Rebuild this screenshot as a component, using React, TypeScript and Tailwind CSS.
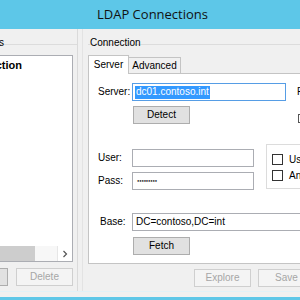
import React from 'react'

const FONT = { fontFamily: '"Liberation Sans", Arial, sans-serif' }

function Button({
  label,
  disabled,
  className = '',
}: {
  label: string
  disabled?: boolean
  className?: string
}) {
  return (
    <div
      className={`flex h-[18px] w-[57px] shrink-0 items-center justify-center border text-[10px] leading-none ${
        disabled
          ? 'border-[#cfcfcf] bg-[#f4f4f4] text-[#a6a6a6]'
          : 'border-[#adadad] bg-[#e1e1e1] text-black'
      } ${className}`}
    >
      {label}
    </div>
  )
}

function TextBox({
  children,
  focused,
  className = '',
}: {
  children?: React.ReactNode
  focused?: boolean
  className?: string
}) {
  return (
    <div
      className={`flex h-[18px] shrink-0 items-center border bg-white pl-[2px] text-[10px] leading-none ${
        focused ? 'border-[#569de5]' : 'border-[#abadb3]'
      } ${className}`}
    >
      {children}
    </div>
  )
}

function CheckRow({ label }: { label: string }) {
  return (
    <div className="flex h-[11px] items-center gap-[6px]">
      <div className="h-[11px] w-[11px] shrink-0 border border-[#333] bg-white" />
      <span className="whitespace-nowrap text-[10px] leading-none">{label}</span>
    </div>
  )
}

export default function App() {
  return (
    <div
      className="flex h-[300px] w-[300px] flex-col overflow-hidden bg-[#f0f0f0] text-black"
      style={FONT}
    >
      {/* title bar */}
      <div className="flex h-[29px] shrink-0 items-center justify-center bg-[#5dc7e8] pl-[5px]">
        <span
          className="text-[13px] leading-none text-[#111]"
          style={{ fontFamily: '"Open Sans", "Noto Sans", sans-serif' }}
        >
          LDAP Connections
        </span>
      </div>

      {/* body */}
      <div className="flex h-[262px] shrink-0">
        {/* left panel: list of connections */}
        <div className="w-[78px] shrink-0 overflow-hidden border-r border-[#dadada]">
          <div className="ml-[-72px] flex w-[150px] flex-col">
            <div className="flex h-[16px] items-start justify-end border-b border-[#dcdcdc] pr-[74px]">
              <span className="mt-[9px] whitespace-nowrap text-[10px] leading-none">Connections</span>
            </div>
            <div className="mr-[5px] mt-[10px] flex h-[207px] flex-col border border-[#abadb3] bg-white">
              <div className="flex flex-1 justify-end pr-[50px] pt-[4px]">
                <span className="whitespace-nowrap text-[11px] font-bold leading-none">
                  Default Connection
                </span>
              </div>
              <div className="flex h-[15px] shrink-0 bg-[#f0f0f0]">
                <div className="flex-1 bg-[#cdcdcd]" />
                <div className="w-[22px] bg-[#f7f7f7]" />
                <div className="flex w-[15px] items-center justify-center border-l border-[#e6e6e6] bg-white">
                  <svg viewBox="0 0 8 8" className="h-[8px] w-[8px]" fill="none" stroke="#555" strokeWidth="1.2">
                    <path d="M2.5 1 L5.5 4 L2.5 7" />
                  </svg>
                </div>
              </div>
            </div>
            <div className="mr-[5px] mt-[6px] flex justify-end gap-[8px]">
              <Button label="Edit" />
              <Button label="Delete" disabled />
            </div>
          </div>
        </div>

        {/* splitter */}
        <div className="w-[10px] shrink-0 pl-[4px]">
          <div className="h-full border-l border-[#e3e3e3]" />
        </div>

        {/* right panel: connection settings */}
        <div className="flex w-[260px] shrink-0 flex-col">
          <div className="flex h-[16px] items-start border-b border-[#dcdcdc] pl-[2px]">
            <span className="mt-[9px] whitespace-nowrap text-[10px] leading-none">Connection</span>
          </div>

          {/* tabs */}
          <div className="mt-[9px] flex h-[19px] items-end">
            <div className="relative z-10 mb-[-1px] flex h-[19px] w-[41px] items-center justify-center border-x border-t border-[#c4c4c4] bg-white text-[10px] leading-none">
              Server
            </div>
            <div className="flex h-[16px] w-[52px] items-center justify-center border-r border-t border-[#c4c4c4] bg-[#f0f0f0] text-[10px] leading-none">
              Advanced
            </div>
          </div>

          {/* tab page */}
          <div className="flex h-[191px] flex-col border-y border-l border-[#c4c4c4] bg-white">
            <div className="mt-[9px] flex items-center">
              <span className="w-[43px] shrink-0 pl-[9px] text-[10px] leading-none">Server:</span>
              <TextBox focused className="w-[154px]">
                <span className="flex h-[13px] items-center bg-[#3399ff] px-[1px] text-white">
                  dc01.contoso.int
                </span>
              </TextBox>
              <span className="ml-[11px] text-[10px] leading-none">Port:</span>
            </div>

            <div className="mt-[5px] flex items-start">
              <Button label="Detect" className="ml-[44px]" />
              <div className="ml-[108px] mt-[8px] h-[9px] w-[12px] shrink-0 border border-[#555] bg-white" />
            </div>

            <div className="mt-[20px] flex items-start">
              <div className="flex flex-col gap-[5px] pt-[5px]">
                <div className="flex items-center">
                  <span className="w-[43px] shrink-0 pl-[9px] text-[10px] leading-none">User:</span>
                  <TextBox className="w-[122px]" />
                </div>
                <div className="flex items-center">
                  <span className="w-[43px] shrink-0 pl-[9px] text-[10px] leading-none">Pass:</span>
                  <TextBox className="w-[122px]">
                    <span className="pl-[2px] text-[4px] leading-none tracking-[-0.2px] text-[#222]">●●●●●●●●●</span>
                  </TextBox>
                </div>
              </div>
              <div className="ml-[12px] flex h-[45px] w-[80px] flex-col gap-[5px] border-l border-t border-b border-[#dcdcdc] pl-[5px] pt-[9px]">
                <CheckRow label="Use SSL" />
                <CheckRow label="Anonymous" />
              </div>
            </div>

            <div className="mt-[23px] flex items-center">
              <span className="w-[43px] shrink-0 pl-[11px] text-[10px] leading-none">Base:</span>
              <TextBox className="w-[200px]">
                <span className="pl-[1px]">DC=contoso,DC=int</span>
              </TextBox>
            </div>

            <div className="mt-[6px] flex">
              <Button label="Fetch" className="ml-[44px]" />
            </div>
          </div>

          <div className="mt-[5px] flex gap-[7px] pl-[106px]">
            <Button label="Explore" disabled />
            <Button label="Save" disabled />
          </div>
        </div>
      </div>

      {/* window frame bottom */}
      <div className="h-[1px] shrink-0 bg-[#e2f1f7]" />
      <div className="h-[5px] shrink-0 bg-[#f0f0f0]" />
      <div className="h-[3px] shrink-0 bg-[#5dc7e8]" />
    </div>
  )
}
